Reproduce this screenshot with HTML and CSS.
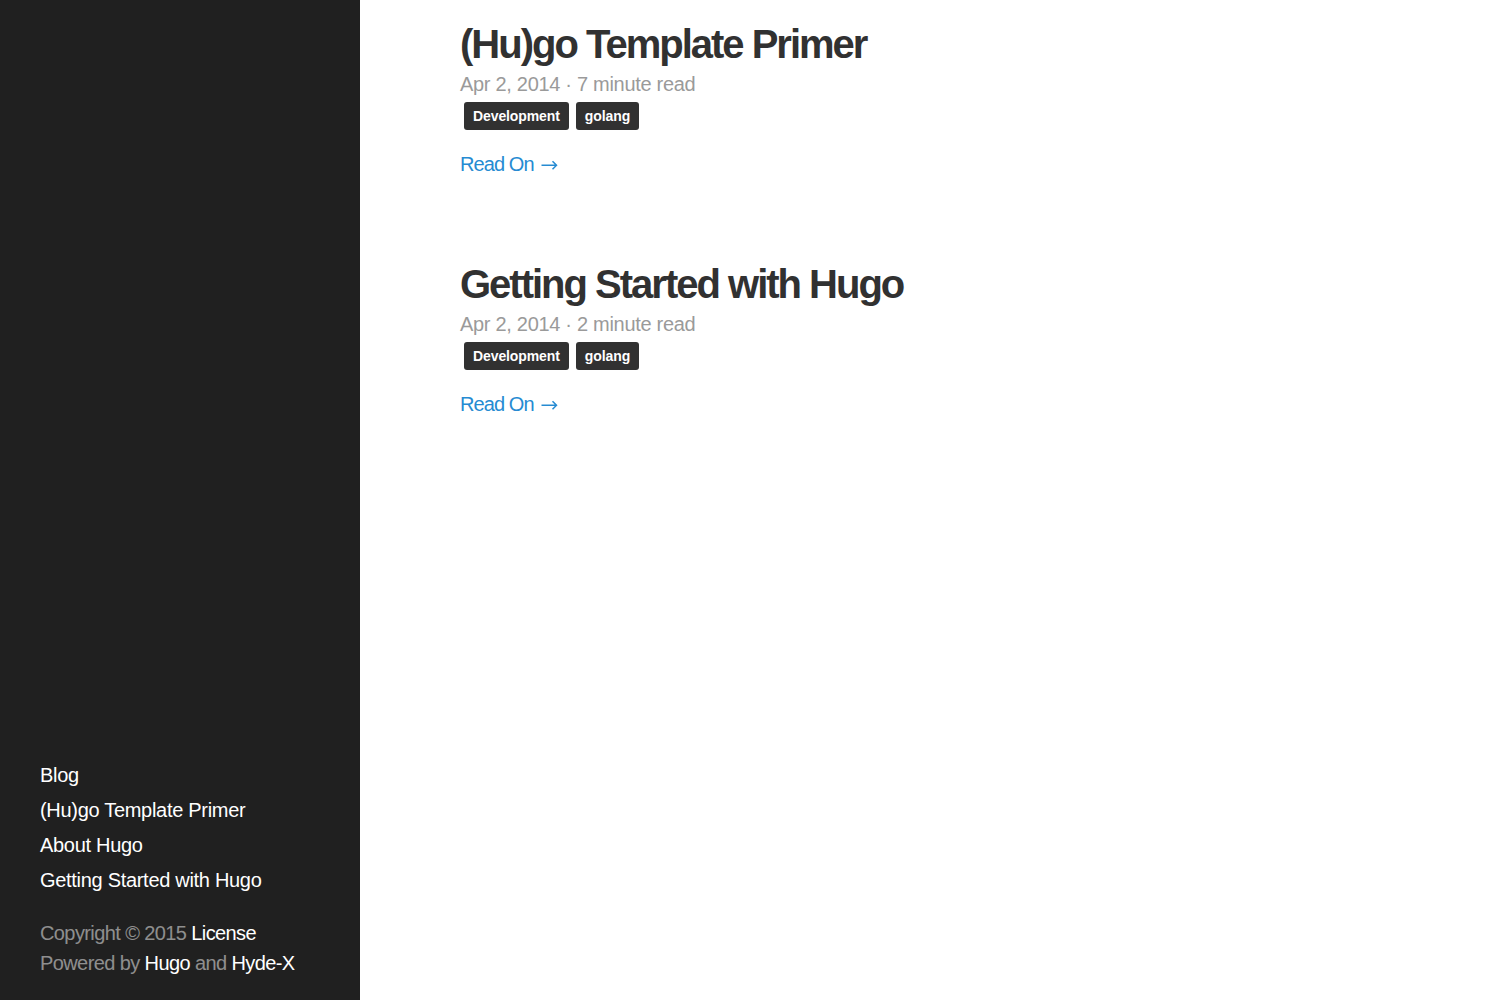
FILE: index.html
```html
<!DOCTYPE html>
<html lang="en">
<head>
<meta charset="utf-8">
<title>Blog</title>
<link rel="stylesheet" href="styles.css">
</head>
<body>
<div class="layout">
  <aside class="sidebar">
    <nav class="sidebar-nav">
      <a class="nav-item" href="#">Blog</a>
      <a class="nav-item" href="#">(Hu)go Template Primer</a>
      <a class="nav-item" href="#">About Hugo</a>
      <a class="nav-item" href="#">Getting Started with Hugo</a>
    </nav>
    <p class="copyright">Copyright &copy; 2015 <a href="#">License</a><br>Powered by <a href="#">Hugo</a> and <a href="#">Hyde-X</a></p>
  </aside>
  <main class="content">
    <article class="post">
      <h1 class="post-title">(Hu)go Template Primer</h1>
      <div class="post-meta">Apr 2, 2014 &middot; 7 minute read</div>
      <div class="tags">
        <a class="tag" href="#">Development</a>
        <a class="tag" href="#">golang</a>
      </div>
      <a class="read-more" href="#">Read On<svg class="arrow" width="17" height="10" viewBox="0 0 17 10" aria-hidden="true"><path d="M0.5 5.2H15.5M11.5 1.2L15.5 5.2L11.5 9.2" fill="none" stroke="currentColor" stroke-width="1.5"/></svg></a>
    </article>
    <article class="post">
      <h1 class="post-title">Getting Started with Hugo</h1>
      <div class="post-meta">Apr 2, 2014 &middot; 2 minute read</div>
      <div class="tags">
        <a class="tag" href="#">Development</a>
        <a class="tag" href="#">golang</a>
      </div>
      <a class="read-more" href="#">Read On<svg class="arrow" width="17" height="10" viewBox="0 0 17 10" aria-hidden="true"><path d="M0.5 5.2H15.5M11.5 1.2L15.5 5.2L11.5 9.2" fill="none" stroke="currentColor" stroke-width="1.5"/></svg></a>
    </article>
  </main>
</div>
</body>
</html>
```
FILE: styles.css
```css
html, body {
  margin: 0;
  padding: 0;
  height: 100%;
}
body {
  font-family: "Liberation Sans", Arial, sans-serif;
  font-size: 20px;
  line-height: 1.5;
  color: #515151;
  background: #fff;
  letter-spacing: -0.3px;
}
a {
  text-decoration: none;
}
.layout {
  display: flex;
  min-height: 100vh;
}
.sidebar {
  flex: 0 0 360px;
  box-sizing: border-box;
  height: 100vh;
  background: #202020;
  color: rgba(255, 255, 255, 0.5);
  padding: 0 40px 22px;
  display: flex;
  flex-direction: column;
  justify-content: flex-end;
}
.sidebar-nav {
  display: flex;
  flex-direction: column;
  padding-top: 1px;
}
.nav-item {
  color: #fff;
  line-height: 35px;
}
.copyright {
  margin: 20px 0 0;
  line-height: 30px;
  letter-spacing: -0.6px;
}
.copyright a {
  color: #fff;
}
.content {
  flex: 1;
  padding: 19px 0 0 100px;
}
.post {
  margin-bottom: 80px;
}
.post-title {
  margin: 0;
  font-size: 40px;
  line-height: 50px;
  font-weight: 700;
  letter-spacing: -2px;
  color: #313131;
}
.post-meta {
  color: #9a9a9a;
  line-height: 30px;
}
.tags {
  display: flex;
  gap: 7px;
  margin: 3px 0 0 4px;
}
.tag {
  background: #313131;
  color: #fff;
  font-size: 14px;
  font-weight: 700;
  letter-spacing: -0.1px;
  line-height: 20px;
  padding: 4px 9px;
  border-radius: 3px;
}
.read-more {
  display: inline-flex;
  align-items: center;
  margin-top: 19px;
  line-height: 30px;
  color: #268bd2;
  letter-spacing: -0.9px;
}
.arrow {
  margin-left: 7px;
  margin-top: 2px;
}
```
